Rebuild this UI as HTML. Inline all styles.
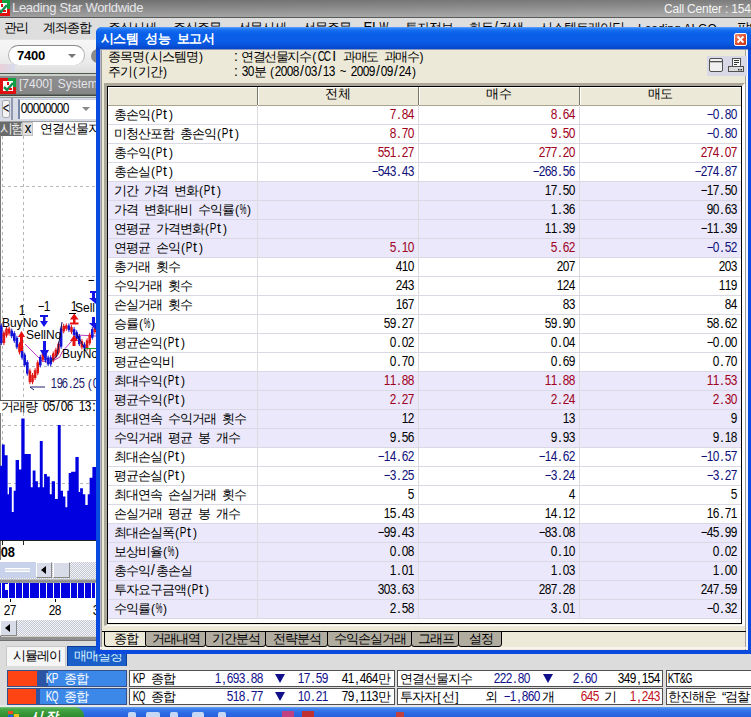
<!DOCTYPE html><html><head><meta charset="utf-8"><style>
*{margin:0;padding:0;box-sizing:border-box}
html,body{width:751px;height:717px;overflow:hidden;background:#d4d0c8;
 font-family:"Liberation Sans",sans-serif;font-size:12px;color:#000}
.a{position:absolute}
.t{white-space:nowrap;line-height:12px}

.g{white-space:nowrap;height:14px;line-height:14px}
.g .h{display:inline-block;vertical-align:top;line-height:14px;overflow:visible;white-space:nowrap}
.g .sp{display:inline-block;height:1px;vertical-align:top}
.g .c{display:inline-flex;justify-content:center;width:6px;vertical-align:top;line-height:14px;font-size:14px;position:relative;top:-1px}
.g .m{font-family:"Liberation Sans",sans-serif;display:inline-block;vertical-align:top;line-height:14px;transform-origin:0 0;overflow:visible;position:relative;top:1px}

.num{font-family:"Liberation Sans",sans-serif;font-size:12px;letter-spacing:0px}
</style></head><body>
<div class="a" style="left:0;top:0;width:751px;height:17px;background:linear-gradient(90deg,rgba(0,0,0,0.05),rgba(255,255,255,0.06)),linear-gradient(#747474,#868686 35%,#9c9c9c 75%,#a8a8a8)"></div>
<div class="a" style="left:0;top:17px;width:751px;height:1px;background:#585c58"></div>
<svg class="a" style="left:-6px;top:0px" width="16" height="16" viewBox="0 0 16 16"><rect x="0" y="0" width="16" height="16" fill="#e01010"/><path d="M8,0 H16 V9 H13 V3 H8 Z" fill="#10a040"/><rect x="3" y="3" width="10" height="10" fill="#fff"/><path d="M4,9 L7,12 L13,5" stroke="#109050" stroke-width="2.5" fill="none"/><rect x="7" y="4" width="2" height="3" fill="#e01010"/><rect x="9" y="10" width="3" height="2" fill="#e01010"/></svg>
<div class="a t" style="left:12px;top:1px;font-size:13px;line-height:14px;color:#e8e8ec;letter-spacing:-0.3px">Leading Star Worldwide</div>
<div class="a t" style="left:664px;top:3px;font-size:12px;line-height:13px;color:#f4f4f4;letter-spacing:-0.2px">Call Center : 1544</div>
<div class="a" style="left:0;top:18px;width:751px;height:21px;background:#dedede"></div>
<div class="a g" style="left:4.0px;top:21px;color:#000;"><span class="h" style="width:24.0px;font-size:13px;letter-spacing:-1.0px;">관리</span></div>
<div class="a g" style="left:43.0px;top:21px;color:#000;"><span class="h" style="width:48.0px;font-size:13px;letter-spacing:-1.0px;">계좌종합</span></div>
<div class="a g" style="left:108.0px;top:21px;color:#000;"><span class="h" style="width:48.0px;font-size:13px;letter-spacing:-1.0px;">주식시세</span></div>
<div class="a g" style="left:173.0px;top:21px;color:#000;"><span class="h" style="width:48.0px;font-size:13px;letter-spacing:-1.0px;">주식주문</span></div>
<div class="a g" style="left:238.0px;top:21px;color:#000;"><span class="h" style="width:48.0px;font-size:13px;letter-spacing:-1.0px;">선물시세</span></div>
<div class="a g" style="left:303.0px;top:21px;color:#000;"><span class="h" style="width:48.0px;font-size:13px;letter-spacing:-1.0px;">선물주문</span></div>
<div class="a g" style="left:405.0px;top:21px;color:#000;"><span class="h" style="width:48.0px;font-size:13px;letter-spacing:-1.0px;">투자정보</span></div>
<div class="a g" style="left:469.0px;top:21px;color:#000;"><span class="h" style="width:24.0px;font-size:13px;letter-spacing:-1.0px;">화두</span><span class="c">/</span><span class="h" style="width:24.0px;font-size:13px;letter-spacing:-1.0px;">검색</span></div>
<div class="a g" style="left:540.0px;top:21px;color:#000;"><span class="h" style="width:84.0px;font-size:13px;letter-spacing:-1.0px;">시스템트레이딩</span></div>
<div class="a g" style="left:737.0px;top:21px;color:#000;"><span class="h" style="width:24.0px;font-size:13px;letter-spacing:-1.0px;">팝업</span></div>
<div class="a g" style="left:364.0px;top:21px;color:#000;"><span class="c" style="width:8px;transform:scaleX(0.942);">E</span><span class="c" style="width:8px;">L</span><span class="c" style="width:8px;transform:scaleX(0.666);">W</span></div>
<div class="a t" style="left:638px;top:23px;font-size:12px;line-height:13px;letter-spacing:0px">Leading ALGO</div>
<div class="a" style="left:0;top:39px;width:751px;height:36px;background:linear-gradient(#d0d0d0 0px,#f6f6f6 1px,#f2f2f2 12px,#e8e8e8 26px,#dcdcdc 34px,#505850 34px,#505850 35.5px,#c8d0c8 35.5px)"></div>
<div class="a" style="left:0;top:64px;width:15px;height:8px;background:linear-gradient(90deg,#e8d0d8,#d8dcec)"></div>
<div class="a" style="left:8px;top:45px;width:77px;height:20px;border-radius:10px;background:#fff;border-top:1px solid #8a8a8a;border-left:1px solid #b0b0b0;border-right:1px solid #b0b0b0"></div>
<div class="a t" style="left:17px;top:49px;font-weight:bold;font-size:13px;line-height:13px;letter-spacing:-0.2px">7400</div>
<div class="a" style="left:68px;top:54px;width:0;height:0;border-left:4px solid transparent;border-right:4px solid transparent;border-top:4px solid #777"></div>
<div class="a" style="left:91px;top:49px;width:14px;height:14px;border-radius:7px;background:#8a8a8a"></div>
<div class="a" style="left:0;top:75px;width:96px;height:23px;background:linear-gradient(#c8d0c8 0px,#c8d0c8 1px,#8e8e8e 1px,#868686 19px,#444a44 20px,#444a44 21px,#d0d8d0 21px,#d0d8d0 22px,#9098a0 22px)"></div>
<svg class="a" style="left:0px;top:78px" width="16" height="16" viewBox="0 0 16 16"><rect x="0" y="0" width="16" height="16" fill="#e01010"/><path d="M8,0 H16 V9 H13 V3 H8 Z" fill="#10a040"/><rect x="3" y="3" width="10" height="10" fill="#fff"/><path d="M4,9 L7,12 L13,5" stroke="#109050" stroke-width="2.5" fill="none"/><rect x="7" y="4" width="2" height="3" fill="#e01010"/><rect x="9" y="10" width="3" height="2" fill="#e01010"/></svg>
<div class="a t" style="left:19px;top:77px;font-size:12px;line-height:14px;color:#e4e4ea;word-spacing:2px">[7400] System</div>
<div class="a" style="left:0;top:98px;width:96px;height:23px;background:#d8dce6"></div>
<div class="a" style="left:2px;top:100px;width:8px;height:18px;background:#f4f4f4;border:1px solid #a8a8b0;border-radius:2px"></div>
<div class="a g" style="left:3.0px;top:102px;color:#000;"><span class="c" style="transform:scaleX(0.807);">&lt;</span></div>
<div class="a" style="left:11px;top:98px;width:2px;height:22px;background:#9098b0"></div>
<div class="a" style="left:18px;top:99px;width:78px;height:20px;background:#fff;border-left:2px solid #7888a8;border-top:1px solid #c8d0e0"></div>
<div class="a g" style="left:21.0px;top:102px;color:#000;"><span class="c" style="transform:scaleX(0.848);">0</span><span class="c" style="transform:scaleX(0.848);">0</span><span class="c" style="transform:scaleX(0.848);">0</span><span class="c" style="transform:scaleX(0.848);">0</span><span class="c" style="transform:scaleX(0.848);">0</span><span class="c" style="transform:scaleX(0.848);">0</span><span class="c" style="transform:scaleX(0.848);">0</span><span class="c" style="transform:scaleX(0.848);">0</span></div>
<div class="a" style="left:82px;top:107px;width:0;height:0;border-left:4px solid transparent;border-right:4px solid transparent;border-top:4px solid #888"></div>
<div class="a" style="left:0;top:121px;width:96px;height:441px;background:#fff"></div>
<div class="a" style="left:0;top:121px;width:96px;height:1px;background:#a0a0a0"></div>
<div class="a" style="left:0;top:122px;width:22px;height:14px;background:#6a6a6a"></div>
<div class="a g" style="left:0.0px;top:122px;color:#f0f0f0;"><span class="h" style="width:22.0px;font-size:13px;letter-spacing:-2.0px;">시험</span></div>
<div class="a" style="left:22px;top:122px;width:11px;height:14px;background:#e0e0e0;border:1px solid #c0c0c0"></div>
<div class="a g" style="left:25.0px;top:122px;color:#000;"><span class="c" style="transform:scaleX(0.943);">x</span></div>
<div class="a g" style="left:40.0px;top:122px;color:#000;"><span class="h" style="width:72.0px;font-size:13px;letter-spacing:-1.0px;">연결선물지수</span><span class="c" style="font-size:12px;top:0px;">(</span><span class="c" style="transform:scaleX(0.653);">C</span><span class="c" style="transform:scaleX(0.653);">C</span><span class="c">I</span></div>
<svg class="a" style="left:0;top:0" width="96" height="717" viewBox="0 0 96 717">
<line x1="0.5" y1="135" x2="0.5" y2="640" stroke="#777" stroke-width="1"/>
<g stroke="#b8b8b8" stroke-width="1" stroke-dasharray="3,3" fill="none">
<line x1="2.5" y1="136" x2="2.5" y2="400"/>
<line x1="23.5" y1="136" x2="23.5" y2="400"/>
<line x1="2" y1="186.5" x2="96" y2="186.5"/>
<line x1="2" y1="276.5" x2="96" y2="276.5"/>
<line x1="2" y1="366.5" x2="96" y2="366.5"/>
<line x1="2.5" y1="401" x2="2.5" y2="540"/>
<line x1="23.5" y1="401" x2="23.5" y2="540"/>
<line x1="2" y1="425.5" x2="96" y2="425.5"/>
<line x1="2" y1="483.5" x2="96" y2="483.5"/>
</g>
<polyline points="25,344 30,349 42,361 50,362.5 60,357 62,352 77,335 96,336" stroke="#c040c0" stroke-width="1" fill="none"/>
<rect x="0.0" y="325.5" width="2.6" height="17.6" fill="#1414d8"/>
<line x1="1.3" y1="323.5" x2="1.3" y2="345.1" stroke="#1414d8" stroke-width="1"/>
<rect x="2.6" y="332.6" width="2.6" height="10.5" fill="#e01818"/>
<line x1="3.9" y1="330.6" x2="3.9" y2="345.1" stroke="#e01818" stroke-width="1"/>
<rect x="5.2" y="328.6" width="2.6" height="7.0" fill="#e01818"/>
<line x1="6.5" y1="326.6" x2="6.5" y2="337.6" stroke="#e01818" stroke-width="1"/>
<rect x="7.8" y="328.6" width="2.6" height="5.0" fill="#e01818"/>
<line x1="9.1" y1="326.6" x2="9.1" y2="335.6" stroke="#e01818" stroke-width="1"/>
<rect x="10.4" y="330.6" width="2.6" height="5.6" fill="#1414d8"/>
<line x1="11.7" y1="328.6" x2="11.7" y2="338.2" stroke="#1414d8" stroke-width="1"/>
<rect x="13.0" y="333.2" width="2.6" height="7.6" fill="#1414d8"/>
<line x1="14.3" y1="331.2" x2="14.3" y2="342.8" stroke="#1414d8" stroke-width="1"/>
<rect x="15.6" y="337.8" width="2.6" height="9.5" fill="#1414d8"/>
<line x1="16.9" y1="335.8" x2="16.9" y2="349.2" stroke="#1414d8" stroke-width="1"/>
<rect x="18.2" y="344.2" width="2.6" height="8.2" fill="#e01818"/>
<line x1="19.5" y1="342.2" x2="19.5" y2="354.5" stroke="#e01818" stroke-width="1"/>
<rect x="20.8" y="349.5" width="2.6" height="8.2" fill="#1414d8"/>
<line x1="22.1" y1="347.5" x2="22.1" y2="359.7" stroke="#1414d8" stroke-width="1"/>
<rect x="23.4" y="354.7" width="2.6" height="10.4" fill="#1414d8"/>
<line x1="24.7" y1="352.7" x2="24.7" y2="367.1" stroke="#1414d8" stroke-width="1"/>
<rect x="26.0" y="362.1" width="2.6" height="11.5" fill="#1414d8"/>
<line x1="27.3" y1="360.1" x2="27.3" y2="375.6" stroke="#1414d8" stroke-width="1"/>
<rect x="28.6" y="370.6" width="2.6" height="11.5" fill="#e01818"/>
<line x1="29.9" y1="368.6" x2="29.9" y2="384.2" stroke="#e01818" stroke-width="1"/>
<rect x="31.2" y="375.0" width="2.6" height="7.2" fill="#e01818"/>
<line x1="32.5" y1="373.0" x2="32.5" y2="384.2" stroke="#e01818" stroke-width="1"/>
<rect x="33.8" y="370.2" width="2.6" height="7.8" fill="#e01818"/>
<line x1="35.1" y1="368.2" x2="35.1" y2="380.0" stroke="#e01818" stroke-width="1"/>
<rect x="36.4" y="362.4" width="2.6" height="10.8" fill="#e01818"/>
<line x1="37.7" y1="360.4" x2="37.7" y2="375.2" stroke="#e01818" stroke-width="1"/>
<rect x="39.0" y="356.9" width="2.6" height="8.5" fill="#1414d8"/>
<line x1="40.3" y1="354.9" x2="40.3" y2="367.4" stroke="#1414d8" stroke-width="1"/>
<rect x="41.6" y="353.6" width="2.6" height="6.2" fill="#e01818"/>
<line x1="42.9" y1="351.6" x2="42.9" y2="361.9" stroke="#e01818" stroke-width="1"/>
<rect x="44.2" y="353.6" width="2.6" height="6.9" fill="#1414d8"/>
<line x1="45.5" y1="351.6" x2="45.5" y2="362.5" stroke="#1414d8" stroke-width="1"/>
<rect x="46.8" y="357.5" width="2.6" height="6.8" fill="#1414d8"/>
<line x1="48.1" y1="355.5" x2="48.1" y2="366.3" stroke="#1414d8" stroke-width="1"/>
<rect x="49.4" y="357.4" width="2.6" height="6.9" fill="#1414d8"/>
<line x1="50.7" y1="355.4" x2="50.7" y2="366.3" stroke="#1414d8" stroke-width="1"/>
<rect x="52.0" y="353.5" width="2.6" height="6.9" fill="#e01818"/>
<line x1="53.3" y1="351.5" x2="53.3" y2="362.4" stroke="#e01818" stroke-width="1"/>
<rect x="54.6" y="349.6" width="2.6" height="6.9" fill="#e01818"/>
<line x1="55.9" y1="347.6" x2="55.9" y2="358.5" stroke="#e01818" stroke-width="1"/>
<rect x="57.2" y="343.7" width="2.6" height="9.0" fill="#e01818"/>
<line x1="58.5" y1="341.7" x2="58.5" y2="354.6" stroke="#e01818" stroke-width="1"/>
<rect x="59.8" y="328.4" width="2.6" height="18.3" fill="#1414d8"/>
<line x1="61.1" y1="326.4" x2="61.1" y2="348.7" stroke="#1414d8" stroke-width="1"/>
<rect x="62.4" y="325.8" width="2.6" height="5.6" fill="#e01818"/>
<line x1="63.7" y1="323.8" x2="63.7" y2="333.4" stroke="#e01818" stroke-width="1"/>
<rect x="65.0" y="325.4" width="2.6" height="3.4" fill="#e01818"/>
<line x1="66.3" y1="323.4" x2="66.3" y2="330.8" stroke="#e01818" stroke-width="1"/>
<rect x="67.6" y="325.4" width="2.6" height="4.7" fill="#1414d8"/>
<line x1="68.9" y1="323.4" x2="68.9" y2="332.1" stroke="#1414d8" stroke-width="1"/>
<rect x="70.2" y="327.1" width="2.6" height="5.0" fill="#e01818"/>
<line x1="71.5" y1="325.1" x2="71.5" y2="334.1" stroke="#e01818" stroke-width="1"/>
<rect x="72.8" y="329.1" width="2.6" height="6.1" fill="#1414d8"/>
<line x1="74.1" y1="327.1" x2="74.1" y2="337.2" stroke="#1414d8" stroke-width="1"/>
<rect x="75.4" y="332.2" width="2.6" height="6.7" fill="#1414d8"/>
<line x1="76.7" y1="330.2" x2="76.7" y2="340.9" stroke="#1414d8" stroke-width="1"/>
<rect x="78.0" y="335.9" width="2.6" height="8.2" fill="#1414d8"/>
<line x1="79.3" y1="333.9" x2="79.3" y2="346.1" stroke="#1414d8" stroke-width="1"/>
<rect x="80.6" y="341.1" width="2.6" height="6.3" fill="#e01818"/>
<line x1="81.9" y1="339.1" x2="81.9" y2="349.4" stroke="#e01818" stroke-width="1"/>
<rect x="83.2" y="344.4" width="2.6" height="4.1" fill="#1414d8"/>
<line x1="84.5" y1="342.4" x2="84.5" y2="350.5" stroke="#1414d8" stroke-width="1"/>
<rect x="85.8" y="340.3" width="2.6" height="8.2" fill="#e01818"/>
<line x1="87.1" y1="338.3" x2="87.1" y2="350.5" stroke="#e01818" stroke-width="1"/>
<rect x="88.4" y="334.7" width="2.6" height="8.6" fill="#e01818"/>
<line x1="89.7" y1="332.7" x2="89.7" y2="345.3" stroke="#e01818" stroke-width="1"/>
<rect x="91.0" y="329.1" width="2.6" height="8.6" fill="#1414d8"/>
<line x1="92.3" y1="327.1" x2="92.3" y2="339.7" stroke="#1414d8" stroke-width="1"/>
<rect x="93.6" y="325.6" width="2.6" height="6.5" fill="#e01818"/>
<line x1="94.9" y1="323.6" x2="94.9" y2="334.1" stroke="#e01818" stroke-width="1"/>
<polyline points="50,362 57,356 62,322" stroke="#101060" stroke-width="1" fill="none"/>
<polyline points="76,333 84,347" stroke="#101060" stroke-width="1" fill="none"/>
<line x1="85" y1="348.5" x2="96" y2="348.5" stroke="#20a020"/>
<g fill="#e81010">
<polygon points="18,337 25,337 21.5,331"/><rect x="20" y="336" width="3" height="15"/>
<polygon points="70,319.5 78.5,319.5 74.2,313.5"/><rect x="73" y="319" width="2.5" height="4"/><rect x="70" y="322.5" width="8.5" height="2"/>
<polygon points="70,341 78,341 74,335"/><rect x="72.5" y="340" width="3" height="6"/>
</g>
<g fill="#1414e8">
<rect x="40" y="315" width="8" height="2"/><rect x="43" y="316" width="2.5" height="5"/><polygon points="40,321 48,321 44,327"/>
<rect x="43" y="341" width="3" height="9"/><polygon points="40,350 49,350 44.5,358"/>
<rect x="90" y="291" width="6" height="2"/><rect x="92" y="292" width="3" height="6"/><polygon points="89,298 96,298 96,304"/>
<rect x="92" y="317" width="3" height="6"/><polygon points="89,323 96,323 96,330"/>
</g>
<path d="M30,387 L45,387 M30,387 L34,390" stroke="#202070" stroke-width="1" fill="none"/>
<line x1="0" y1="400.5" x2="96" y2="400.5" stroke="#555" stroke-width="1"/>
<path d="M0,540 L0.0,465.8 L1.9,465.8 L1.9,444.5 L4.7,444.5 L4.7,455.2 L7.6,455.2 L7.6,494.3 L9.0,494.3 L9.0,487.2 L11.8,487.2 L11.8,512.0 L13.7,512.0 L13.7,490.7 L15.6,490.7 L15.6,459.9 L19.0,459.9 L19.0,469.4 L21.3,469.4 L21.3,418.4 L24.6,418.4 L24.6,454.0 L27.5,454.0 L27.5,454.0 L30.8,454.0 L30.8,487.2 L32.7,487.2 L32.7,470.6 L35.5,470.6 L35.5,481.2 L37.9,481.2 L37.9,487.2 L39.8,487.2 L39.8,440.9 L42.7,440.9 L42.7,487.2 L44.1,487.2 L44.1,474.1 L46.9,474.1 L46.9,476.5 L49.8,476.5 L49.8,494.3 L51.7,494.3 L51.7,481.2 L55.0,481.2 L55.0,499.0 L57.8,499.0 L57.8,425.1 L60.7,425.1 L60.7,490.7 L63.0,490.7 L63.0,496.6 L65.4,496.6 L65.4,507.3 L67.3,507.3 L67.3,490.7 L68.7,490.7 L68.7,472.9 L71.1,472.9 L71.1,471.8 L75.4,471.8 L75.4,457.1 L78.7,457.1 L78.7,491.9 L80.1,491.9 L80.1,488.3 L82.9,488.3 L82.9,494.3 L85.3,494.3 L85.3,504.9 L87.7,504.9 L87.7,494.3 L89.6,494.3 L89.6,477.7 L92.4,477.7 L92.4,467.0 L94.8,467.0 L94.8,467.0 L96.0,467.0 L96,540 Z" fill="#0000e0"/>
<line x1="0" y1="540.5" x2="96" y2="540.5" stroke="#222" stroke-width="1"/>
<line x1="2.5" y1="541" x2="2.5" y2="545" stroke="#222"/>
<line x1="23.5" y1="541" x2="23.5" y2="545" stroke="#222"/>
</svg>
<div class="a g" style="left:19.0px;top:304px;color:#000;"><span class="c" style="transform:scaleX(0.848);">1</span></div>
<div class="a g" style="left:38.0px;top:300px;color:#000;"><span class="c" style="transform:scaleX(0.807);">−</span><span class="c" style="transform:scaleX(0.848);">1</span></div>
<div class="a g" style="left:71.0px;top:300px;color:#000;"><span class="c" style="transform:scaleX(0.848);">1</span></div>
<div class="a g" style="left:88.0px;top:274px;color:#000;"><span class="c" style="transform:scaleX(0.807);">−</span></div>
<div class="a t" style="left:75px;top:302px;font-size:12px;line-height:12px">Sell</div>
<div class="a" style="left:69px;top:313px;width:7px;height:1px;background:#000"></div>
<div class="a t" style="left:2px;top:317px;font-size:12px;line-height:12px">BuyNo</div>
<div class="a t" style="left:26px;top:329px;font-size:12px;line-height:12px">SellNo</div>
<div class="a t" style="left:62px;top:348px;font-size:12px;line-height:12px">BuyNo</div>
<div class="a g" style="left:51.0px;top:377px;color:#1a1a6a;"><span class="c" style="width:5.6px;transform:scaleX(0.791);">1</span><span class="c" style="width:5.6px;transform:scaleX(0.791);">9</span><span class="c" style="width:5.6px;transform:scaleX(0.791);">6</span><span class="c" style="width:5.6px;">.</span><span class="c" style="width:5.6px;transform:scaleX(0.791);">2</span><span class="c" style="width:5.6px;transform:scaleX(0.791);">5</span></div>
<div class="a g" style="left:87.0px;top:377px;color:#1a1a6a;"><span class="c" style="width:5.6px;font-size:12px;top:0px;">(</span><span class="c" style="width:5.6px;transform:scaleX(0.791);">0</span></div>
<div class="a" style="left:0;top:401px;width:96px;height:12px;background:#fff"></div>
<div class="a g" style="left:1.0px;top:400px;color:#000;"><span class="h" style="width:36.0px;font-size:13px;letter-spacing:-1.0px;">거래량</span><span class="sp" style="width:6px"></span><span class="c" style="transform:scaleX(0.848);">0</span><span class="c" style="transform:scaleX(0.848);">5</span><span class="c">/</span><span class="c" style="transform:scaleX(0.848);">0</span><span class="c" style="transform:scaleX(0.848);">6</span><span class="sp" style="width:6px"></span><span class="c" style="transform:scaleX(0.848);">1</span><span class="c" style="transform:scaleX(0.848);">3</span><span class="c">:</span></div>
<div class="a g" style="left:1.0px;top:546px;color:#000;"><span class="c" style="width:6.5px;transform:scaleX(0.918);font-weight:bold;">0</span><span class="c" style="width:6.5px;transform:scaleX(0.918);font-weight:bold;">8</span></div>
<div class="a" style="left:0;top:560px;width:96px;height:2px;background:#fff"></div>
<div class="a" style="left:0;top:562px;width:96px;height:17px;background:repeating-conic-gradient(#c4c8d4 0 25%,#f4f4f8 0 50%) 0 0/2px 2px"></div>
<div class="a" style="left:0;top:562px;width:36px;height:16px;background:#c8d2ea"></div>
<div class="a" style="left:5px;top:568px;width:25px;height:4px;border-top:1px solid #fff;border-bottom:1px solid #fff;background:#e0e4ee"></div>
<div class="a" style="left:36px;top:562px;width:16px;height:16px;background:#d8dce8;border:1px solid #fff;border-right-color:#888;border-bottom-color:#888"></div>
<div class="a" style="left:41px;top:566px;width:0;height:0;border-top:4px solid transparent;border-bottom:4px solid transparent;border-right:5px solid #000"></div>
<div class="a" style="left:53px;top:562px;width:17px;height:16px;background:#d8dce8;border:1px solid #fff;border-right-color:#888;border-bottom-color:#888"></div>
<div class="a" style="left:0;top:579px;width:96px;height:4px;background:linear-gradient(#e0e0e0,#9a9a9a 1px,#8a8a8a 3px,#b0b0b0)"></div>
<svg class="a" style="left:0;top:583px" width="96" height="15"><rect x="0" y="0" width="96" height="15" fill="#0000e0"/><rect x="1" y="0" width="1" height="15" fill="#fff"/><rect x="8" y="0" width="1" height="15" fill="#fff"/><rect x="15" y="0" width="1" height="15" fill="#fff"/><rect x="22" y="0" width="1" height="15" fill="#fff"/><rect x="29" y="0" width="1" height="15" fill="#fff"/><rect x="39" y="0" width="1" height="15" fill="#fff"/><rect x="46" y="0" width="1" height="15" fill="#fff"/><rect x="53" y="0" width="1" height="15" fill="#fff"/><rect x="60" y="0" width="1" height="15" fill="#fff"/><rect x="70" y="0" width="1" height="15" fill="#fff"/><rect x="77" y="0" width="1" height="15" fill="#fff"/><rect x="84" y="0" width="1" height="15" fill="#fff"/><rect x="91" y="0" width="1" height="15" fill="#fff"/><rect x="95" y="0" width="1" height="15" fill="#fff"/><rect x="5" y="1" width="4" height="6" fill="#fff"/></svg>
<div class="a" style="left:0;top:598px;width:96px;height:22px;background:#fff"></div>
<div class="a" style="left:10px;top:599px;width:1px;height:3px;background:#000"></div>
<div class="a" style="left:55px;top:599px;width:1px;height:3px;background:#000"></div>
<div class="a g" style="left:4.0px;top:604px;color:#000;"><span class="c" style="transform:scaleX(0.848);">2</span><span class="c" style="transform:scaleX(0.848);">7</span></div>
<div class="a g" style="left:49.0px;top:604px;color:#000;"><span class="c" style="transform:scaleX(0.848);">2</span><span class="c" style="transform:scaleX(0.848);">8</span></div>
<div class="a g" style="left:93.0px;top:604px;color:#000;"><span class="c" style="transform:scaleX(0.848);">3</span></div>
<div class="a" style="left:0;top:620px;width:96px;height:16px;background:repeating-conic-gradient(#c4c8d4 0 25%,#f4f4f8 0 50%) 0 0/2px 2px"></div>
<div class="a" style="left:0;top:620px;width:17px;height:16px;background:#d8dce8;border:1px solid #fff;border-right-color:#888;border-bottom-color:#888"></div>
<div class="a" style="left:5px;top:624px;width:0;height:0;border-top:4px solid transparent;border-bottom:4px solid transparent;border-right:5px solid #000"></div>
<div class="a" style="left:0;top:637px;width:96px;height:3px;background:#909090"></div>
<div class="a" style="left:0;top:640px;width:751px;height:67px;background:#dcdcdc"></div>
<div class="a" style="left:0;top:705px;width:751px;height:2px;background:#e8e8e8"></div>
<div class="a" style="left:0;top:640px;width:96px;height:1px;background:#707070"></div>
<div class="a" style="left:6px;top:646px;width:60px;height:20px;background:#f6f6f6;border:1px solid #c8c8c8;border-bottom:none"></div>
<div class="a g" style="left:13.0px;top:649px;color:#000;"><span class="h" style="width:48.0px;font-size:13px;letter-spacing:-1.0px;">시뮬레이</span></div>
<div class="a" style="left:67px;top:646px;width:60px;height:20px;background:#1a5fc8;border:1px solid #0c3c98;border-bottom:none"></div>
<div class="a g" style="left:74.0px;top:649px;color:#d8f4ff;"><span class="h" style="width:48.0px;font-size:13px;letter-spacing:-1.0px;">매매설정</span></div>
<div class="a" style="left:7px;top:670px;width:120px;height:17px;background:#3c88e8;border:1px solid #34508a"></div>
<div class="a" style="left:8px;top:671px;width:29px;height:15px;background:#ff4414"></div>
<div class="a" style="left:37px;top:671px;width:11px;height:15px;background:#2c54a4"></div>
<div class="a g" style="left:46.0px;top:672px;color:#fff;"><span class="c" style="transform:scaleX(0.707);">K</span><span class="c" style="transform:scaleX(0.707);">P</span><span class="sp" style="width:6px"></span><span class="h" style="width:24.0px;font-size:13px;letter-spacing:-1.0px;">종합</span></div>
<div class="a" style="left:7px;top:688px;width:120px;height:17px;background:#3c88e8;border:1px solid #34508a"></div>
<div class="a" style="left:8px;top:689px;width:28px;height:15px;background:#ff4414"></div>
<div class="a" style="left:36px;top:689px;width:4px;height:15px;background:#2c54a4"></div>
<div class="a g" style="left:46.0px;top:690px;color:#fff;"><span class="c" style="transform:scaleX(0.707);">K</span><span class="c" style="transform:scaleX(0.606);">Q</span><span class="sp" style="width:6px"></span><span class="h" style="width:24.0px;font-size:13px;letter-spacing:-1.0px;">종합</span></div>
<div class="a" style="left:129px;top:670px;width:266px;height:17px;background:#fff;border:1px solid #505050"></div>
<div class="a" style="left:397px;top:670px;width:266px;height:17px;background:#fff;border:1px solid #505050"></div>
<div class="a" style="left:666px;top:670px;width:90px;height:17px;background:#fff;border:1px solid #505050"></div>
<div class="a g" style="left:133.0px;top:672px;color:#000;"><span class="c" style="transform:scaleX(0.707);">K</span><span class="c" style="transform:scaleX(0.707);">P</span><span class="sp" style="width:6px"></span><span class="h" style="width:24.0px;font-size:13px;letter-spacing:-1.0px;">종합</span></div>
<div class="a g" style="left:215.0px;top:672px;color:#10108a;"><span class="c" style="transform:scaleX(0.848);">1</span><span class="c">,</span><span class="c" style="transform:scaleX(0.848);">6</span><span class="c" style="transform:scaleX(0.848);">9</span><span class="c" style="transform:scaleX(0.848);">3</span><span class="c">.</span><span class="c" style="transform:scaleX(0.848);">8</span><span class="c" style="transform:scaleX(0.848);">8</span></div>
<div class="a g" style="left:298.0px;top:672px;color:#10108a;"><span class="c" style="transform:scaleX(0.848);">1</span><span class="c" style="transform:scaleX(0.848);">7</span><span class="c">.</span><span class="c" style="transform:scaleX(0.848);">5</span><span class="c" style="transform:scaleX(0.848);">9</span></div>
<div class="a g" style="left:342.0px;top:672px;color:#000;"><span class="c" style="transform:scaleX(0.848);">4</span><span class="c" style="transform:scaleX(0.848);">1</span><span class="c">,</span><span class="c" style="transform:scaleX(0.848);">4</span><span class="c" style="transform:scaleX(0.848);">6</span><span class="c" style="transform:scaleX(0.848);">4</span><span class="h" style="width:12.0px;font-size:13px;letter-spacing:-1.0px;">만</span></div>
<div class="a g" style="left:400.0px;top:672px;color:#000;"><span class="h" style="width:72.0px;font-size:13px;letter-spacing:-1.0px;">연결선물지수</span></div>
<div class="a g" style="left:494.0px;top:672px;color:#10108a;"><span class="c" style="transform:scaleX(0.848);">2</span><span class="c" style="transform:scaleX(0.848);">2</span><span class="c" style="transform:scaleX(0.848);">2</span><span class="c">.</span><span class="c" style="transform:scaleX(0.848);">8</span><span class="c" style="transform:scaleX(0.848);">0</span></div>
<div class="a g" style="left:573.0px;top:672px;color:#10108a;"><span class="c" style="transform:scaleX(0.848);">2</span><span class="c">.</span><span class="c" style="transform:scaleX(0.848);">6</span><span class="c" style="transform:scaleX(0.848);">0</span></div>
<div class="a g" style="left:618.0px;top:672px;color:#000;"><span class="c" style="transform:scaleX(0.848);">3</span><span class="c" style="transform:scaleX(0.848);">4</span><span class="c" style="transform:scaleX(0.848);">9</span><span class="c">,</span><span class="c" style="transform:scaleX(0.848);">1</span><span class="c" style="transform:scaleX(0.848);">5</span><span class="c" style="transform:scaleX(0.848);">4</span></div>
<div class="a g" style="left:668.0px;top:672px;color:#000;"><span class="c" style="transform:scaleX(0.707);">K</span><span class="c" style="transform:scaleX(0.772);">T</span><span class="c" style="transform:scaleX(0.707);">&amp;</span><span class="c" style="transform:scaleX(0.606);">G</span></div>
<div class="a" style="left:275px;top:674px;width:0;height:0;border-left:5px solid transparent;border-right:5px solid transparent;border-top:9px solid #10108a"></div>
<div class="a" style="left:543px;top:674px;width:0;height:0;border-left:5px solid transparent;border-right:5px solid transparent;border-top:9px solid #10108a"></div>
<div class="a" style="left:129px;top:688px;width:266px;height:17px;background:#fff;border:1px solid #505050"></div>
<div class="a" style="left:397px;top:688px;width:266px;height:17px;background:#fff;border:1px solid #505050"></div>
<div class="a" style="left:666px;top:688px;width:90px;height:17px;background:#fff;border:1px solid #505050"></div>
<div class="a g" style="left:133.0px;top:690px;color:#000;"><span class="c" style="transform:scaleX(0.707);">K</span><span class="c" style="transform:scaleX(0.606);">Q</span><span class="sp" style="width:6px"></span><span class="h" style="width:24.0px;font-size:13px;letter-spacing:-1.0px;">종합</span></div>
<div class="a g" style="left:227.0px;top:690px;color:#10108a;"><span class="c" style="transform:scaleX(0.848);">5</span><span class="c" style="transform:scaleX(0.848);">1</span><span class="c" style="transform:scaleX(0.848);">8</span><span class="c">.</span><span class="c" style="transform:scaleX(0.848);">7</span><span class="c" style="transform:scaleX(0.848);">7</span></div>
<div class="a g" style="left:298.0px;top:690px;color:#10108a;"><span class="c" style="transform:scaleX(0.848);">1</span><span class="c" style="transform:scaleX(0.848);">0</span><span class="c">.</span><span class="c" style="transform:scaleX(0.848);">2</span><span class="c" style="transform:scaleX(0.848);">1</span></div>
<div class="a g" style="left:342.0px;top:690px;color:#000;"><span class="c" style="transform:scaleX(0.848);">7</span><span class="c" style="transform:scaleX(0.848);">9</span><span class="c">,</span><span class="c" style="transform:scaleX(0.848);">1</span><span class="c" style="transform:scaleX(0.848);">1</span><span class="c" style="transform:scaleX(0.848);">3</span><span class="h" style="width:12.0px;font-size:13px;letter-spacing:-1.0px;">만</span></div>
<div class="a g" style="left:400.0px;top:690px;color:#000;"><span class="h" style="width:36.0px;font-size:13px;letter-spacing:-1.0px;">투자자</span><span class="c" style="font-size:12px;top:0px;">[</span><span class="h" style="width:12.0px;font-size:13px;letter-spacing:-1.0px;">선</span><span class="c" style="font-size:12px;top:0px;">]</span></div>
<div class="a g" style="left:485.0px;top:690px;color:#000;"><span class="h" style="width:12.0px;font-size:13px;letter-spacing:-1.0px;">외</span></div>
<div class="a g" style="left:504.0px;top:690px;color:#10108a;"><span class="c" style="transform:scaleX(0.807);">−</span><span class="c" style="transform:scaleX(0.848);">1</span><span class="c">,</span><span class="c" style="transform:scaleX(0.848);">8</span><span class="c" style="transform:scaleX(0.848);">6</span><span class="c" style="transform:scaleX(0.848);">0</span></div>
<div class="a g" style="left:542.0px;top:690px;color:#000;"><span class="h" style="width:12.0px;font-size:13px;letter-spacing:-1.0px;">개</span></div>
<div class="a g" style="left:581.0px;top:690px;color:#c01020;"><span class="c" style="transform:scaleX(0.848);">6</span><span class="c" style="transform:scaleX(0.848);">4</span><span class="c" style="transform:scaleX(0.848);">5</span></div>
<div class="a g" style="left:604.0px;top:690px;color:#000;"><span class="h" style="width:12.0px;font-size:13px;letter-spacing:-1.0px;">기</span></div>
<div class="a g" style="left:630.0px;top:690px;color:#c01020;"><span class="c" style="transform:scaleX(0.848);">1</span><span class="c">,</span><span class="c" style="transform:scaleX(0.848);">2</span><span class="c" style="transform:scaleX(0.848);">4</span><span class="c" style="transform:scaleX(0.848);">3</span></div>
<div class="a g" style="left:668.0px;top:690px;color:#000;"><span class="h" style="width:48.0px;font-size:13px;letter-spacing:-1.0px;">한진해운</span><span class="sp" style="width:6px"></span><span class="h" style="width:36.0px;font-size:13px;letter-spacing:-1.0px;">“검찰</span></div>
<div class="a" style="left:275px;top:692px;width:0;height:0;border-left:5px solid transparent;border-right:5px solid transparent;border-top:9px solid #10108a"></div>
<div class="a" style="left:0;top:707px;width:751px;height:10px;background:linear-gradient(#6aa0f4,#3c7eec 2px,#2c6ae4 6px,#2862dc)"></div>
<div class="a" style="left:0;top:707px;width:84px;height:10px;background:linear-gradient(#7cc47c,#48a848 2px,#389838 6px,#2e8a2e);border-radius:0 9px 0 0"></div>
<svg class="a" style="left:8px;top:710px" width="12" height="7"><rect x="0" y="1" width="5" height="3" fill="#f05020"/><rect x="6" y="0" width="5" height="3" fill="#40b030"/><rect x="0" y="5" width="5" height="3" fill="#2060e0"/><rect x="6" y="4" width="5" height="3" fill="#f0c020"/></svg>
<div class="a t" style="left:30px;top:711px;font-size:13px;font-weight:bold;color:#fff;font-style:italic;letter-spacing:2px">시작</div>
<div class="a" style="left:128px;top:712px;width:8px;height:5px;background:#c8d8f4;border-radius:2px 2px 0 0"></div>
<div class="a" style="left:146px;top:712px;width:14px;height:5px;background:#c8d8f4;border-radius:2px 2px 0 0"></div>
<div class="a" style="left:170px;top:712px;width:8px;height:5px;background:#c8d8f4;border-radius:2px 2px 0 0"></div>
<div class="a" style="left:192px;top:712px;width:12px;height:5px;background:#c8d8f4;border-radius:2px 2px 0 0"></div>
<div class="a" style="left:218px;top:712px;width:8px;height:5px;background:#c8d8f4;border-radius:2px 2px 0 0"></div>
<div class="a" style="left:282px;top:711px;width:12px;height:6px;background:#c04080"></div>
<div class="a" style="left:302px;top:711px;width:12px;height:6px;background:#c03030"></div>
<div class="a" style="left:396px;top:712px;width:8px;height:5px;background:#c04040"></div>
<div class="a" style="left:96px;top:27px;width:660px;height:627px;background:#0b4ade;border-radius:6px 6px 0 0"></div>
<div class="a" style="left:96px;top:27px;width:660px;height:23px;border-radius:6px 6px 0 0;background:linear-gradient(#68a8fc 0px,#3888f8 1px,#1870f0 3px,#0a60ea 6px,#0a5ce6 14px,#0854dc 18px,#0648cc 21px,#0644c4 23px)"></div>
<div class="a g" style="left:101.0px;top:32px;color:#fff;"><span class="h" style="width:37.2px;font-size:13px;letter-spacing:-0.6px;font-weight:bold;">시스템</span><span class="sp" style="width:7px"></span><span class="h" style="width:24.8px;font-size:13px;letter-spacing:-0.6px;font-weight:bold;">성능</span><span class="sp" style="width:7px"></span><span class="h" style="width:37.2px;font-size:13px;letter-spacing:-0.6px;font-weight:bold;">보고서</span></div>
<div class="a" style="left:734px;top:33px;width:13px;height:13px;background:linear-gradient(135deg,#f09070,#e05030 50%,#c83818);border:1px solid #fff;border-radius:2px"></div>
<svg class="a" style="left:734px;top:33px" width="13" height="13"><path d="M3.5,3.5 L9.5,9.5 M9.5,3.5 L3.5,9.5" stroke="#fff" stroke-width="2"/></svg>
<div class="a" style="left:100px;top:50px;width:648px;height:600px;background:#ece9d8"></div>
<div class="a" style="left:100px;top:49px;width:648px;height:1px;background:#8898c0"></div>
<div class="a" style="left:100px;top:50px;width:1px;height:600px;background:#b0b8d0"></div>
<div class="a" style="left:101px;top:50px;width:1px;height:600px;background:#a09c90"></div>
<div class="a" style="left:745px;top:50px;width:1px;height:600px;background:#a8a098"></div>
<div class="a" style="left:746px;top:50px;width:2px;height:600px;background:#eef6fc"></div>
<div class="a g" style="left:108.0px;top:50px;color:#000;"><span class="h" style="width:36.0px;font-size:13px;letter-spacing:-1.0px;">종목명</span><span class="c" style="font-size:12px;top:0px;">(</span><span class="h" style="width:48.0px;font-size:13px;letter-spacing:-1.0px;">시스템명</span><span class="c" style="font-size:12px;top:0px;">)</span></div>
<div class="a g" style="left:233.0px;top:50px;color:#000;"><span class="c">:</span></div>
<div class="a g" style="left:241.0px;top:50px;color:#000;"><span class="h" style="width:69.6px;font-size:13px;letter-spacing:-1.4px;">연결선물지수</span></div>
<div class="a g" style="left:311.0px;top:50px;color:#000;"><span class="c" style="width:6.6px;font-size:12px;top:0px;">(</span><span class="c" style="width:6.6px;transform:scaleX(0.718);">C</span><span class="c" style="width:6.6px;transform:scaleX(0.718);">C</span><span class="c" style="width:6.6px;">I</span></div>
<div class="a g" style="left:343.0px;top:50px;color:#000;"><span class="h" style="width:34.8px;font-size:13px;letter-spacing:-1.4px;">과매도</span><span class="sp" style="width:6px"></span><span class="h" style="width:34.8px;font-size:13px;letter-spacing:-1.4px;">과매수</span><span class="c" style="font-size:12px;top:0px;">)</span></div>
<div class="a g" style="left:108.0px;top:65px;color:#000;"><span class="h" style="width:24.0px;font-size:13px;letter-spacing:-1.0px;">주기</span><span class="c" style="font-size:12px;top:0px;">(</span><span class="h" style="width:24.0px;font-size:13px;letter-spacing:-1.0px;">기간</span><span class="c" style="font-size:12px;top:0px;">)</span></div>
<div class="a g" style="left:233.0px;top:65px;color:#000;"><span class="c">:</span></div>
<div class="a g" style="left:242.0px;top:65px;color:#000;"><span class="c" style="transform:scaleX(0.848);">3</span><span class="c" style="transform:scaleX(0.848);">0</span><span class="h" style="width:12.0px;font-size:13px;letter-spacing:-1.0px;">분</span></div>
<div class="a g" style="left:269.0px;top:65px;color:#000;"><span class="c" style="font-size:12px;top:0px;">(</span><span class="c" style="transform:scaleX(0.848);">2</span><span class="c" style="transform:scaleX(0.848);">0</span><span class="c" style="transform:scaleX(0.848);">0</span><span class="c" style="transform:scaleX(0.848);">8</span><span class="c">/</span><span class="c" style="transform:scaleX(0.848);">0</span><span class="c" style="transform:scaleX(0.848);">3</span><span class="c">/</span><span class="c" style="transform:scaleX(0.848);">1</span><span class="c" style="transform:scaleX(0.848);">3</span><span class="sp" style="width:5px"></span><span class="c" style="transform:scaleX(0.807);">~</span><span class="sp" style="width:5px"></span><span class="c" style="transform:scaleX(0.848);">2</span><span class="c" style="transform:scaleX(0.848);">0</span><span class="c" style="transform:scaleX(0.848);">0</span><span class="c" style="transform:scaleX(0.848);">9</span><span class="c">/</span><span class="c" style="transform:scaleX(0.848);">0</span><span class="c" style="transform:scaleX(0.848);">9</span><span class="c">/</span><span class="c" style="transform:scaleX(0.848);">2</span><span class="c" style="transform:scaleX(0.848);">4</span><span class="c" style="font-size:12px;top:0px;">)</span></div>
<div class="a" style="left:707px;top:56px;width:40px;height:20px;background:#d8d8e6"></div>
<svg class="a" style="left:707px;top:56px" width="40" height="20"><rect x="2.5" y="2.5" width="13" height="13" rx="1.5" fill="#f0f0f0" stroke="#505050"/><line x1="3" y1="5.5" x2="15" y2="5.5" stroke="#505050"/><line x1="3" y1="6.5" x2="15" y2="6.5" stroke="#c0c0c0"/><rect x="25.5" y="2.5" width="8" height="9" fill="#f8f8f8" stroke="#505050"/><line x1="27" y1="4.5" x2="32" y2="4.5" stroke="#333"/><line x1="27" y1="6.5" x2="32" y2="6.5" stroke="#333"/><line x1="27" y1="8.5" x2="30" y2="8.5" stroke="#333"/><rect x="21.5" y="10.5" width="15" height="5" fill="#dcdcdc" stroke="#505050"/><rect x="31" y="13" width="1.5" height="1.5" fill="#333"/><rect x="33.5" y="13" width="1.5" height="1.5" fill="#333"/></svg>
<div class="a" style="left:104px;top:83px;width:641px;height:543px;border-top:3px solid #aca899;border-left:3px solid #aca899;border-right:3px solid #fff;border-bottom:1px solid #fff"></div>
<div class="a" style="left:107px;top:86px;width:635px;height:538px;border:1px solid #000;background:#fff"></div>
<div class="a" style="left:108px;top:87px;width:633px;height:19px;background:#ece9d8;border-bottom:1px solid #a8a490"></div>
<div class="a" style="left:108px;top:87px;width:633px;height:1px;background:#fff"></div>
<div class="a" style="left:108px;top:87px;width:1px;height:18px;background:#fff"></div>
<div class="a" style="left:257px;top:87px;width:1px;height:18px;background:#7a7868"></div>
<div class="a" style="left:258px;top:88px;width:1px;height:17px;background:#fff"></div>
<div class="a" style="left:418px;top:87px;width:1px;height:18px;background:#7a7868"></div>
<div class="a" style="left:419px;top:88px;width:1px;height:17px;background:#fff"></div>
<div class="a" style="left:579px;top:87px;width:1px;height:18px;background:#7a7868"></div>
<div class="a" style="left:580px;top:88px;width:1px;height:17px;background:#fff"></div>
<div class="a g" style="left:325.0px;top:87px;color:#000;"><span class="h" style="width:25.0px;font-size:13px;letter-spacing:-0.5px;">전체</span></div>
<div class="a g" style="left:486.0px;top:87px;color:#000;"><span class="h" style="width:25.0px;font-size:13px;letter-spacing:-0.5px;">매수</span></div>
<div class="a g" style="left:647.5px;top:87px;color:#000;"><span class="h" style="width:25.0px;font-size:13px;letter-spacing:-0.5px;">매도</span></div>
<div class="a" style="left:108px;top:106px;width:633px;height:19px;background:#fff;border-bottom:1px solid #dad8e4"></div>
<div class="a g" style="left:114.0px;top:108px;color:#000;"><span class="h" style="width:36.0px;font-size:13px;letter-spacing:-1.0px;">총손익</span><span class="c" style="font-size:12px;top:0px;">(</span><span class="c" style="transform:scaleX(0.707);">P</span><span class="c">t</span><span class="c" style="font-size:12px;top:0px;">)</span></div>
<div class="a g" style="left:390.0px;top:108px;color:#a0001c;"><span class="c" style="transform:scaleX(0.848);">7</span><span class="c">.</span><span class="c" style="transform:scaleX(0.848);">8</span><span class="c" style="transform:scaleX(0.848);">4</span></div>
<div class="a g" style="left:551.0px;top:108px;color:#a0001c;"><span class="c" style="transform:scaleX(0.848);">8</span><span class="c">.</span><span class="c" style="transform:scaleX(0.848);">6</span><span class="c" style="transform:scaleX(0.848);">4</span></div>
<div class="a g" style="left:707.0px;top:108px;color:#10107a;"><span class="c" style="transform:scaleX(0.807);">−</span><span class="c" style="transform:scaleX(0.848);">0</span><span class="c">.</span><span class="c" style="transform:scaleX(0.848);">8</span><span class="c" style="transform:scaleX(0.848);">0</span></div>
<div class="a" style="left:108px;top:125px;width:633px;height:19px;background:#fff;border-bottom:1px solid #dad8e4"></div>
<div class="a g" style="left:114.0px;top:127px;color:#000;"><span class="h" style="width:60.0px;font-size:13px;letter-spacing:-1.0px;">미청산포함</span><span class="sp" style="width:6px"></span><span class="h" style="width:36.0px;font-size:13px;letter-spacing:-1.0px;">총손익</span><span class="c" style="font-size:12px;top:0px;">(</span><span class="c" style="transform:scaleX(0.707);">P</span><span class="c">t</span><span class="c" style="font-size:12px;top:0px;">)</span></div>
<div class="a g" style="left:390.0px;top:127px;color:#a0001c;"><span class="c" style="transform:scaleX(0.848);">8</span><span class="c">.</span><span class="c" style="transform:scaleX(0.848);">7</span><span class="c" style="transform:scaleX(0.848);">0</span></div>
<div class="a g" style="left:551.0px;top:127px;color:#a0001c;"><span class="c" style="transform:scaleX(0.848);">9</span><span class="c">.</span><span class="c" style="transform:scaleX(0.848);">5</span><span class="c" style="transform:scaleX(0.848);">0</span></div>
<div class="a g" style="left:707.0px;top:127px;color:#10107a;"><span class="c" style="transform:scaleX(0.807);">−</span><span class="c" style="transform:scaleX(0.848);">0</span><span class="c">.</span><span class="c" style="transform:scaleX(0.848);">8</span><span class="c" style="transform:scaleX(0.848);">0</span></div>
<div class="a" style="left:108px;top:144px;width:633px;height:19px;background:#fff;border-bottom:1px solid #dad8e4"></div>
<div class="a g" style="left:114.0px;top:146px;color:#000;"><span class="h" style="width:36.0px;font-size:13px;letter-spacing:-1.0px;">총수익</span><span class="c" style="font-size:12px;top:0px;">(</span><span class="c" style="transform:scaleX(0.707);">P</span><span class="c">t</span><span class="c" style="font-size:12px;top:0px;">)</span></div>
<div class="a g" style="left:378.0px;top:146px;color:#a0001c;"><span class="c" style="transform:scaleX(0.848);">5</span><span class="c" style="transform:scaleX(0.848);">5</span><span class="c" style="transform:scaleX(0.848);">1</span><span class="c">.</span><span class="c" style="transform:scaleX(0.848);">2</span><span class="c" style="transform:scaleX(0.848);">7</span></div>
<div class="a g" style="left:539.0px;top:146px;color:#a0001c;"><span class="c" style="transform:scaleX(0.848);">2</span><span class="c" style="transform:scaleX(0.848);">7</span><span class="c" style="transform:scaleX(0.848);">7</span><span class="c">.</span><span class="c" style="transform:scaleX(0.848);">2</span><span class="c" style="transform:scaleX(0.848);">0</span></div>
<div class="a g" style="left:701.0px;top:146px;color:#a0001c;"><span class="c" style="transform:scaleX(0.848);">2</span><span class="c" style="transform:scaleX(0.848);">7</span><span class="c" style="transform:scaleX(0.848);">4</span><span class="c">.</span><span class="c" style="transform:scaleX(0.848);">0</span><span class="c" style="transform:scaleX(0.848);">7</span></div>
<div class="a" style="left:108px;top:163px;width:633px;height:19px;background:#fff;border-bottom:1px solid #dad8e4"></div>
<div class="a g" style="left:114.0px;top:165px;color:#000;"><span class="h" style="width:36.0px;font-size:13px;letter-spacing:-1.0px;">총손실</span><span class="c" style="font-size:12px;top:0px;">(</span><span class="c" style="transform:scaleX(0.707);">P</span><span class="c">t</span><span class="c" style="font-size:12px;top:0px;">)</span></div>
<div class="a g" style="left:372.0px;top:165px;color:#10107a;"><span class="c" style="transform:scaleX(0.807);">−</span><span class="c" style="transform:scaleX(0.848);">5</span><span class="c" style="transform:scaleX(0.848);">4</span><span class="c" style="transform:scaleX(0.848);">3</span><span class="c">.</span><span class="c" style="transform:scaleX(0.848);">4</span><span class="c" style="transform:scaleX(0.848);">3</span></div>
<div class="a g" style="left:533.0px;top:165px;color:#10107a;"><span class="c" style="transform:scaleX(0.807);">−</span><span class="c" style="transform:scaleX(0.848);">2</span><span class="c" style="transform:scaleX(0.848);">6</span><span class="c" style="transform:scaleX(0.848);">8</span><span class="c">.</span><span class="c" style="transform:scaleX(0.848);">5</span><span class="c" style="transform:scaleX(0.848);">6</span></div>
<div class="a g" style="left:695.0px;top:165px;color:#10107a;"><span class="c" style="transform:scaleX(0.807);">−</span><span class="c" style="transform:scaleX(0.848);">2</span><span class="c" style="transform:scaleX(0.848);">7</span><span class="c" style="transform:scaleX(0.848);">4</span><span class="c">.</span><span class="c" style="transform:scaleX(0.848);">8</span><span class="c" style="transform:scaleX(0.848);">7</span></div>
<div class="a" style="left:108px;top:182px;width:633px;height:19px;background:#eae8fa;border-bottom:1px solid #dad8e4"></div>
<div class="a g" style="left:114.0px;top:184px;color:#000;"><span class="h" style="width:24.0px;font-size:13px;letter-spacing:-1.0px;">기간</span><span class="sp" style="width:6px"></span><span class="h" style="width:24.0px;font-size:13px;letter-spacing:-1.0px;">가격</span><span class="sp" style="width:6px"></span><span class="h" style="width:24.0px;font-size:13px;letter-spacing:-1.0px;">변화</span><span class="c" style="font-size:12px;top:0px;">(</span><span class="c" style="transform:scaleX(0.707);">P</span><span class="c">t</span><span class="c" style="font-size:12px;top:0px;">)</span></div>
<div class="a g" style="left:545.0px;top:184px;color:#000;"><span class="c" style="transform:scaleX(0.848);">1</span><span class="c" style="transform:scaleX(0.848);">7</span><span class="c">.</span><span class="c" style="transform:scaleX(0.848);">5</span><span class="c" style="transform:scaleX(0.848);">0</span></div>
<div class="a g" style="left:701.0px;top:184px;color:#000;"><span class="c" style="transform:scaleX(0.807);">−</span><span class="c" style="transform:scaleX(0.848);">1</span><span class="c" style="transform:scaleX(0.848);">7</span><span class="c">.</span><span class="c" style="transform:scaleX(0.848);">5</span><span class="c" style="transform:scaleX(0.848);">0</span></div>
<div class="a" style="left:108px;top:201px;width:633px;height:19px;background:#eae8fa;border-bottom:1px solid #dad8e4"></div>
<div class="a g" style="left:114.0px;top:203px;color:#000;"><span class="h" style="width:24.0px;font-size:13px;letter-spacing:-1.0px;">가격</span><span class="sp" style="width:6px"></span><span class="h" style="width:48.0px;font-size:13px;letter-spacing:-1.0px;">변화대비</span><span class="sp" style="width:6px"></span><span class="h" style="width:36.0px;font-size:13px;letter-spacing:-1.0px;">수익률</span><span class="c" style="font-size:12px;top:0px;">(</span><span class="c" style="transform:scaleX(0.530);">%</span><span class="c" style="font-size:12px;top:0px;">)</span></div>
<div class="a g" style="left:551.0px;top:203px;color:#000;"><span class="c" style="transform:scaleX(0.848);">1</span><span class="c">.</span><span class="c" style="transform:scaleX(0.848);">3</span><span class="c" style="transform:scaleX(0.848);">6</span></div>
<div class="a g" style="left:707.0px;top:203px;color:#000;"><span class="c" style="transform:scaleX(0.848);">9</span><span class="c" style="transform:scaleX(0.848);">0</span><span class="c">.</span><span class="c" style="transform:scaleX(0.848);">6</span><span class="c" style="transform:scaleX(0.848);">3</span></div>
<div class="a" style="left:108px;top:220px;width:633px;height:19px;background:#eae8fa;border-bottom:1px solid #dad8e4"></div>
<div class="a g" style="left:114.0px;top:222px;color:#000;"><span class="h" style="width:36.0px;font-size:13px;letter-spacing:-1.0px;">연평균</span><span class="sp" style="width:6px"></span><span class="h" style="width:48.0px;font-size:13px;letter-spacing:-1.0px;">가격변화</span><span class="c" style="font-size:12px;top:0px;">(</span><span class="c" style="transform:scaleX(0.707);">P</span><span class="c">t</span><span class="c" style="font-size:12px;top:0px;">)</span></div>
<div class="a g" style="left:545.0px;top:222px;color:#000;"><span class="c" style="transform:scaleX(0.848);">1</span><span class="c" style="transform:scaleX(0.848);">1</span><span class="c">.</span><span class="c" style="transform:scaleX(0.848);">3</span><span class="c" style="transform:scaleX(0.848);">9</span></div>
<div class="a g" style="left:701.0px;top:222px;color:#000;"><span class="c" style="transform:scaleX(0.807);">−</span><span class="c" style="transform:scaleX(0.848);">1</span><span class="c" style="transform:scaleX(0.848);">1</span><span class="c">.</span><span class="c" style="transform:scaleX(0.848);">3</span><span class="c" style="transform:scaleX(0.848);">9</span></div>
<div class="a" style="left:108px;top:239px;width:633px;height:19px;background:#eae8fa;border-bottom:1px solid #dad8e4"></div>
<div class="a g" style="left:114.0px;top:241px;color:#000;"><span class="h" style="width:36.0px;font-size:13px;letter-spacing:-1.0px;">연평균</span><span class="sp" style="width:6px"></span><span class="h" style="width:24.0px;font-size:13px;letter-spacing:-1.0px;">손익</span><span class="c" style="font-size:12px;top:0px;">(</span><span class="c" style="transform:scaleX(0.707);">P</span><span class="c">t</span><span class="c" style="font-size:12px;top:0px;">)</span></div>
<div class="a g" style="left:390.0px;top:241px;color:#a0001c;"><span class="c" style="transform:scaleX(0.848);">5</span><span class="c">.</span><span class="c" style="transform:scaleX(0.848);">1</span><span class="c" style="transform:scaleX(0.848);">0</span></div>
<div class="a g" style="left:551.0px;top:241px;color:#a0001c;"><span class="c" style="transform:scaleX(0.848);">5</span><span class="c">.</span><span class="c" style="transform:scaleX(0.848);">6</span><span class="c" style="transform:scaleX(0.848);">2</span></div>
<div class="a g" style="left:707.0px;top:241px;color:#10107a;"><span class="c" style="transform:scaleX(0.807);">−</span><span class="c" style="transform:scaleX(0.848);">0</span><span class="c">.</span><span class="c" style="transform:scaleX(0.848);">5</span><span class="c" style="transform:scaleX(0.848);">2</span></div>
<div class="a" style="left:108px;top:258px;width:633px;height:19px;background:#fff;border-bottom:1px solid #dad8e4"></div>
<div class="a g" style="left:114.0px;top:260px;color:#000;"><span class="h" style="width:36.0px;font-size:13px;letter-spacing:-1.0px;">총거래</span><span class="sp" style="width:6px"></span><span class="h" style="width:24.0px;font-size:13px;letter-spacing:-1.0px;">횟수</span></div>
<div class="a g" style="left:396.0px;top:260px;color:#000;"><span class="c" style="transform:scaleX(0.848);">4</span><span class="c" style="transform:scaleX(0.848);">1</span><span class="c" style="transform:scaleX(0.848);">0</span></div>
<div class="a g" style="left:557.0px;top:260px;color:#000;"><span class="c" style="transform:scaleX(0.848);">2</span><span class="c" style="transform:scaleX(0.848);">0</span><span class="c" style="transform:scaleX(0.848);">7</span></div>
<div class="a g" style="left:719.0px;top:260px;color:#000;"><span class="c" style="transform:scaleX(0.848);">2</span><span class="c" style="transform:scaleX(0.848);">0</span><span class="c" style="transform:scaleX(0.848);">3</span></div>
<div class="a" style="left:108px;top:277px;width:633px;height:19px;background:#fff;border-bottom:1px solid #dad8e4"></div>
<div class="a g" style="left:114.0px;top:279px;color:#000;"><span class="h" style="width:48.0px;font-size:13px;letter-spacing:-1.0px;">수익거래</span><span class="sp" style="width:6px"></span><span class="h" style="width:24.0px;font-size:13px;letter-spacing:-1.0px;">횟수</span></div>
<div class="a g" style="left:396.0px;top:279px;color:#000;"><span class="c" style="transform:scaleX(0.848);">2</span><span class="c" style="transform:scaleX(0.848);">4</span><span class="c" style="transform:scaleX(0.848);">3</span></div>
<div class="a g" style="left:557.0px;top:279px;color:#000;"><span class="c" style="transform:scaleX(0.848);">1</span><span class="c" style="transform:scaleX(0.848);">2</span><span class="c" style="transform:scaleX(0.848);">4</span></div>
<div class="a g" style="left:719.0px;top:279px;color:#000;"><span class="c" style="transform:scaleX(0.848);">1</span><span class="c" style="transform:scaleX(0.848);">1</span><span class="c" style="transform:scaleX(0.848);">9</span></div>
<div class="a" style="left:108px;top:296px;width:633px;height:19px;background:#fff;border-bottom:1px solid #dad8e4"></div>
<div class="a g" style="left:114.0px;top:298px;color:#000;"><span class="h" style="width:48.0px;font-size:13px;letter-spacing:-1.0px;">손실거래</span><span class="sp" style="width:6px"></span><span class="h" style="width:24.0px;font-size:13px;letter-spacing:-1.0px;">횟수</span></div>
<div class="a g" style="left:396.0px;top:298px;color:#000;"><span class="c" style="transform:scaleX(0.848);">1</span><span class="c" style="transform:scaleX(0.848);">6</span><span class="c" style="transform:scaleX(0.848);">7</span></div>
<div class="a g" style="left:563.0px;top:298px;color:#000;"><span class="c" style="transform:scaleX(0.848);">8</span><span class="c" style="transform:scaleX(0.848);">3</span></div>
<div class="a g" style="left:725.0px;top:298px;color:#000;"><span class="c" style="transform:scaleX(0.848);">8</span><span class="c" style="transform:scaleX(0.848);">4</span></div>
<div class="a" style="left:108px;top:315px;width:633px;height:19px;background:#fff;border-bottom:1px solid #dad8e4"></div>
<div class="a g" style="left:114.0px;top:317px;color:#000;"><span class="h" style="width:24.0px;font-size:13px;letter-spacing:-1.0px;">승률</span><span class="c" style="font-size:12px;top:0px;">(</span><span class="c" style="transform:scaleX(0.530);">%</span><span class="c" style="font-size:12px;top:0px;">)</span></div>
<div class="a g" style="left:384.0px;top:317px;color:#000;"><span class="c" style="transform:scaleX(0.848);">5</span><span class="c" style="transform:scaleX(0.848);">9</span><span class="c">.</span><span class="c" style="transform:scaleX(0.848);">2</span><span class="c" style="transform:scaleX(0.848);">7</span></div>
<div class="a g" style="left:545.0px;top:317px;color:#000;"><span class="c" style="transform:scaleX(0.848);">5</span><span class="c" style="transform:scaleX(0.848);">9</span><span class="c">.</span><span class="c" style="transform:scaleX(0.848);">9</span><span class="c" style="transform:scaleX(0.848);">0</span></div>
<div class="a g" style="left:707.0px;top:317px;color:#000;"><span class="c" style="transform:scaleX(0.848);">5</span><span class="c" style="transform:scaleX(0.848);">8</span><span class="c">.</span><span class="c" style="transform:scaleX(0.848);">6</span><span class="c" style="transform:scaleX(0.848);">2</span></div>
<div class="a" style="left:108px;top:334px;width:633px;height:19px;background:#fff;border-bottom:1px solid #dad8e4"></div>
<div class="a g" style="left:114.0px;top:336px;color:#000;"><span class="h" style="width:48.0px;font-size:13px;letter-spacing:-1.0px;">평균손익</span><span class="c" style="font-size:12px;top:0px;">(</span><span class="c" style="transform:scaleX(0.707);">P</span><span class="c">t</span><span class="c" style="font-size:12px;top:0px;">)</span></div>
<div class="a g" style="left:390.0px;top:336px;color:#000;"><span class="c" style="transform:scaleX(0.848);">0</span><span class="c">.</span><span class="c" style="transform:scaleX(0.848);">0</span><span class="c" style="transform:scaleX(0.848);">2</span></div>
<div class="a g" style="left:551.0px;top:336px;color:#000;"><span class="c" style="transform:scaleX(0.848);">0</span><span class="c">.</span><span class="c" style="transform:scaleX(0.848);">0</span><span class="c" style="transform:scaleX(0.848);">4</span></div>
<div class="a g" style="left:707.0px;top:336px;color:#000;"><span class="c" style="transform:scaleX(0.807);">−</span><span class="c" style="transform:scaleX(0.848);">0</span><span class="c">.</span><span class="c" style="transform:scaleX(0.848);">0</span><span class="c" style="transform:scaleX(0.848);">0</span></div>
<div class="a" style="left:108px;top:353px;width:633px;height:19px;background:#fff;border-bottom:1px solid #dad8e4"></div>
<div class="a g" style="left:114.0px;top:355px;color:#000;"><span class="h" style="width:60.0px;font-size:13px;letter-spacing:-1.0px;">평균손익비</span></div>
<div class="a g" style="left:390.0px;top:355px;color:#000;"><span class="c" style="transform:scaleX(0.848);">0</span><span class="c">.</span><span class="c" style="transform:scaleX(0.848);">7</span><span class="c" style="transform:scaleX(0.848);">0</span></div>
<div class="a g" style="left:551.0px;top:355px;color:#000;"><span class="c" style="transform:scaleX(0.848);">0</span><span class="c">.</span><span class="c" style="transform:scaleX(0.848);">6</span><span class="c" style="transform:scaleX(0.848);">9</span></div>
<div class="a g" style="left:713.0px;top:355px;color:#000;"><span class="c" style="transform:scaleX(0.848);">0</span><span class="c">.</span><span class="c" style="transform:scaleX(0.848);">7</span><span class="c" style="transform:scaleX(0.848);">0</span></div>
<div class="a" style="left:108px;top:372px;width:633px;height:19px;background:#eae8fa;border-bottom:1px solid #dad8e4"></div>
<div class="a g" style="left:114.0px;top:374px;color:#000;"><span class="h" style="width:48.0px;font-size:13px;letter-spacing:-1.0px;">최대수익</span><span class="c" style="font-size:12px;top:0px;">(</span><span class="c" style="transform:scaleX(0.707);">P</span><span class="c">t</span><span class="c" style="font-size:12px;top:0px;">)</span></div>
<div class="a g" style="left:384.0px;top:374px;color:#a0001c;"><span class="c" style="transform:scaleX(0.848);">1</span><span class="c" style="transform:scaleX(0.848);">1</span><span class="c">.</span><span class="c" style="transform:scaleX(0.848);">8</span><span class="c" style="transform:scaleX(0.848);">8</span></div>
<div class="a g" style="left:545.0px;top:374px;color:#a0001c;"><span class="c" style="transform:scaleX(0.848);">1</span><span class="c" style="transform:scaleX(0.848);">1</span><span class="c">.</span><span class="c" style="transform:scaleX(0.848);">8</span><span class="c" style="transform:scaleX(0.848);">8</span></div>
<div class="a g" style="left:707.0px;top:374px;color:#a0001c;"><span class="c" style="transform:scaleX(0.848);">1</span><span class="c" style="transform:scaleX(0.848);">1</span><span class="c">.</span><span class="c" style="transform:scaleX(0.848);">5</span><span class="c" style="transform:scaleX(0.848);">3</span></div>
<div class="a" style="left:108px;top:391px;width:633px;height:19px;background:#eae8fa;border-bottom:1px solid #dad8e4"></div>
<div class="a g" style="left:114.0px;top:393px;color:#000;"><span class="h" style="width:48.0px;font-size:13px;letter-spacing:-1.0px;">평균수익</span><span class="c" style="font-size:12px;top:0px;">(</span><span class="c" style="transform:scaleX(0.707);">P</span><span class="c">t</span><span class="c" style="font-size:12px;top:0px;">)</span></div>
<div class="a g" style="left:390.0px;top:393px;color:#a0001c;"><span class="c" style="transform:scaleX(0.848);">2</span><span class="c">.</span><span class="c" style="transform:scaleX(0.848);">2</span><span class="c" style="transform:scaleX(0.848);">7</span></div>
<div class="a g" style="left:551.0px;top:393px;color:#a0001c;"><span class="c" style="transform:scaleX(0.848);">2</span><span class="c">.</span><span class="c" style="transform:scaleX(0.848);">2</span><span class="c" style="transform:scaleX(0.848);">4</span></div>
<div class="a g" style="left:713.0px;top:393px;color:#a0001c;"><span class="c" style="transform:scaleX(0.848);">2</span><span class="c">.</span><span class="c" style="transform:scaleX(0.848);">3</span><span class="c" style="transform:scaleX(0.848);">0</span></div>
<div class="a" style="left:108px;top:410px;width:633px;height:19px;background:#eae8fa;border-bottom:1px solid #dad8e4"></div>
<div class="a g" style="left:114.0px;top:412px;color:#000;"><span class="h" style="width:48.0px;font-size:13px;letter-spacing:-1.0px;">최대연속</span><span class="sp" style="width:6px"></span><span class="h" style="width:48.0px;font-size:13px;letter-spacing:-1.0px;">수익거래</span><span class="sp" style="width:6px"></span><span class="h" style="width:24.0px;font-size:13px;letter-spacing:-1.0px;">횟수</span></div>
<div class="a g" style="left:402.0px;top:412px;color:#000;"><span class="c" style="transform:scaleX(0.848);">1</span><span class="c" style="transform:scaleX(0.848);">2</span></div>
<div class="a g" style="left:563.0px;top:412px;color:#000;"><span class="c" style="transform:scaleX(0.848);">1</span><span class="c" style="transform:scaleX(0.848);">3</span></div>
<div class="a g" style="left:731.0px;top:412px;color:#000;"><span class="c" style="transform:scaleX(0.848);">9</span></div>
<div class="a" style="left:108px;top:429px;width:633px;height:19px;background:#eae8fa;border-bottom:1px solid #dad8e4"></div>
<div class="a g" style="left:114.0px;top:431px;color:#000;"><span class="h" style="width:48.0px;font-size:13px;letter-spacing:-1.0px;">수익거래</span><span class="sp" style="width:6px"></span><span class="h" style="width:24.0px;font-size:13px;letter-spacing:-1.0px;">평균</span><span class="sp" style="width:6px"></span><span class="h" style="width:12.0px;font-size:13px;letter-spacing:-1.0px;">봉</span><span class="sp" style="width:6px"></span><span class="h" style="width:24.0px;font-size:13px;letter-spacing:-1.0px;">개수</span></div>
<div class="a g" style="left:390.0px;top:431px;color:#000;"><span class="c" style="transform:scaleX(0.848);">9</span><span class="c">.</span><span class="c" style="transform:scaleX(0.848);">5</span><span class="c" style="transform:scaleX(0.848);">6</span></div>
<div class="a g" style="left:551.0px;top:431px;color:#000;"><span class="c" style="transform:scaleX(0.848);">9</span><span class="c">.</span><span class="c" style="transform:scaleX(0.848);">9</span><span class="c" style="transform:scaleX(0.848);">3</span></div>
<div class="a g" style="left:713.0px;top:431px;color:#000;"><span class="c" style="transform:scaleX(0.848);">9</span><span class="c">.</span><span class="c" style="transform:scaleX(0.848);">1</span><span class="c" style="transform:scaleX(0.848);">8</span></div>
<div class="a" style="left:108px;top:448px;width:633px;height:19px;background:#fff;border-bottom:1px solid #dad8e4"></div>
<div class="a g" style="left:114.0px;top:450px;color:#000;"><span class="h" style="width:48.0px;font-size:13px;letter-spacing:-1.0px;">최대손실</span><span class="c" style="font-size:12px;top:0px;">(</span><span class="c" style="transform:scaleX(0.707);">P</span><span class="c">t</span><span class="c" style="font-size:12px;top:0px;">)</span></div>
<div class="a g" style="left:378.0px;top:450px;color:#10107a;"><span class="c" style="transform:scaleX(0.807);">−</span><span class="c" style="transform:scaleX(0.848);">1</span><span class="c" style="transform:scaleX(0.848);">4</span><span class="c">.</span><span class="c" style="transform:scaleX(0.848);">6</span><span class="c" style="transform:scaleX(0.848);">2</span></div>
<div class="a g" style="left:539.0px;top:450px;color:#10107a;"><span class="c" style="transform:scaleX(0.807);">−</span><span class="c" style="transform:scaleX(0.848);">1</span><span class="c" style="transform:scaleX(0.848);">4</span><span class="c">.</span><span class="c" style="transform:scaleX(0.848);">6</span><span class="c" style="transform:scaleX(0.848);">2</span></div>
<div class="a g" style="left:701.0px;top:450px;color:#10107a;"><span class="c" style="transform:scaleX(0.807);">−</span><span class="c" style="transform:scaleX(0.848);">1</span><span class="c" style="transform:scaleX(0.848);">0</span><span class="c">.</span><span class="c" style="transform:scaleX(0.848);">5</span><span class="c" style="transform:scaleX(0.848);">7</span></div>
<div class="a" style="left:108px;top:467px;width:633px;height:19px;background:#fff;border-bottom:1px solid #dad8e4"></div>
<div class="a g" style="left:114.0px;top:469px;color:#000;"><span class="h" style="width:48.0px;font-size:13px;letter-spacing:-1.0px;">평균손실</span><span class="c" style="font-size:12px;top:0px;">(</span><span class="c" style="transform:scaleX(0.707);">P</span><span class="c">t</span><span class="c" style="font-size:12px;top:0px;">)</span></div>
<div class="a g" style="left:384.0px;top:469px;color:#10107a;"><span class="c" style="transform:scaleX(0.807);">−</span><span class="c" style="transform:scaleX(0.848);">3</span><span class="c">.</span><span class="c" style="transform:scaleX(0.848);">2</span><span class="c" style="transform:scaleX(0.848);">5</span></div>
<div class="a g" style="left:545.0px;top:469px;color:#10107a;"><span class="c" style="transform:scaleX(0.807);">−</span><span class="c" style="transform:scaleX(0.848);">3</span><span class="c">.</span><span class="c" style="transform:scaleX(0.848);">2</span><span class="c" style="transform:scaleX(0.848);">4</span></div>
<div class="a g" style="left:707.0px;top:469px;color:#10107a;"><span class="c" style="transform:scaleX(0.807);">−</span><span class="c" style="transform:scaleX(0.848);">3</span><span class="c">.</span><span class="c" style="transform:scaleX(0.848);">2</span><span class="c" style="transform:scaleX(0.848);">7</span></div>
<div class="a" style="left:108px;top:486px;width:633px;height:19px;background:#fff;border-bottom:1px solid #dad8e4"></div>
<div class="a g" style="left:114.0px;top:488px;color:#000;"><span class="h" style="width:48.0px;font-size:13px;letter-spacing:-1.0px;">최대연속</span><span class="sp" style="width:6px"></span><span class="h" style="width:48.0px;font-size:13px;letter-spacing:-1.0px;">손실거래</span><span class="sp" style="width:6px"></span><span class="h" style="width:24.0px;font-size:13px;letter-spacing:-1.0px;">횟수</span></div>
<div class="a g" style="left:408.0px;top:488px;color:#000;"><span class="c" style="transform:scaleX(0.848);">5</span></div>
<div class="a g" style="left:569.0px;top:488px;color:#000;"><span class="c" style="transform:scaleX(0.848);">4</span></div>
<div class="a g" style="left:731.0px;top:488px;color:#000;"><span class="c" style="transform:scaleX(0.848);">5</span></div>
<div class="a" style="left:108px;top:505px;width:633px;height:19px;background:#fff;border-bottom:1px solid #dad8e4"></div>
<div class="a g" style="left:114.0px;top:507px;color:#000;"><span class="h" style="width:48.0px;font-size:13px;letter-spacing:-1.0px;">손실거래</span><span class="sp" style="width:6px"></span><span class="h" style="width:24.0px;font-size:13px;letter-spacing:-1.0px;">평균</span><span class="sp" style="width:6px"></span><span class="h" style="width:12.0px;font-size:13px;letter-spacing:-1.0px;">봉</span><span class="sp" style="width:6px"></span><span class="h" style="width:24.0px;font-size:13px;letter-spacing:-1.0px;">개수</span></div>
<div class="a g" style="left:384.0px;top:507px;color:#000;"><span class="c" style="transform:scaleX(0.848);">1</span><span class="c" style="transform:scaleX(0.848);">5</span><span class="c">.</span><span class="c" style="transform:scaleX(0.848);">4</span><span class="c" style="transform:scaleX(0.848);">3</span></div>
<div class="a g" style="left:545.0px;top:507px;color:#000;"><span class="c" style="transform:scaleX(0.848);">1</span><span class="c" style="transform:scaleX(0.848);">4</span><span class="c">.</span><span class="c" style="transform:scaleX(0.848);">1</span><span class="c" style="transform:scaleX(0.848);">2</span></div>
<div class="a g" style="left:707.0px;top:507px;color:#000;"><span class="c" style="transform:scaleX(0.848);">1</span><span class="c" style="transform:scaleX(0.848);">6</span><span class="c">.</span><span class="c" style="transform:scaleX(0.848);">7</span><span class="c" style="transform:scaleX(0.848);">1</span></div>
<div class="a" style="left:108px;top:524px;width:633px;height:19px;background:#eae8fa;border-bottom:1px solid #dad8e4"></div>
<div class="a g" style="left:114.0px;top:526px;color:#000;"><span class="h" style="width:60.0px;font-size:13px;letter-spacing:-1.0px;">최대손실폭</span><span class="c" style="font-size:12px;top:0px;">(</span><span class="c" style="transform:scaleX(0.707);">P</span><span class="c">t</span><span class="c" style="font-size:12px;top:0px;">)</span></div>
<div class="a g" style="left:378.0px;top:526px;color:#000;"><span class="c" style="transform:scaleX(0.807);">−</span><span class="c" style="transform:scaleX(0.848);">9</span><span class="c" style="transform:scaleX(0.848);">9</span><span class="c">.</span><span class="c" style="transform:scaleX(0.848);">4</span><span class="c" style="transform:scaleX(0.848);">3</span></div>
<div class="a g" style="left:539.0px;top:526px;color:#000;"><span class="c" style="transform:scaleX(0.807);">−</span><span class="c" style="transform:scaleX(0.848);">8</span><span class="c" style="transform:scaleX(0.848);">3</span><span class="c">.</span><span class="c" style="transform:scaleX(0.848);">0</span><span class="c" style="transform:scaleX(0.848);">8</span></div>
<div class="a g" style="left:701.0px;top:526px;color:#000;"><span class="c" style="transform:scaleX(0.807);">−</span><span class="c" style="transform:scaleX(0.848);">4</span><span class="c" style="transform:scaleX(0.848);">5</span><span class="c">.</span><span class="c" style="transform:scaleX(0.848);">9</span><span class="c" style="transform:scaleX(0.848);">9</span></div>
<div class="a" style="left:108px;top:543px;width:633px;height:19px;background:#eae8fa;border-bottom:1px solid #dad8e4"></div>
<div class="a g" style="left:114.0px;top:545px;color:#000;"><span class="h" style="width:48.0px;font-size:13px;letter-spacing:-1.0px;">보상비율</span><span class="c" style="font-size:12px;top:0px;">(</span><span class="c" style="transform:scaleX(0.530);">%</span><span class="c" style="font-size:12px;top:0px;">)</span></div>
<div class="a g" style="left:390.0px;top:545px;color:#000;"><span class="c" style="transform:scaleX(0.848);">0</span><span class="c">.</span><span class="c" style="transform:scaleX(0.848);">0</span><span class="c" style="transform:scaleX(0.848);">8</span></div>
<div class="a g" style="left:551.0px;top:545px;color:#000;"><span class="c" style="transform:scaleX(0.848);">0</span><span class="c">.</span><span class="c" style="transform:scaleX(0.848);">1</span><span class="c" style="transform:scaleX(0.848);">0</span></div>
<div class="a g" style="left:713.0px;top:545px;color:#000;"><span class="c" style="transform:scaleX(0.848);">0</span><span class="c">.</span><span class="c" style="transform:scaleX(0.848);">0</span><span class="c" style="transform:scaleX(0.848);">2</span></div>
<div class="a" style="left:108px;top:562px;width:633px;height:19px;background:#eae8fa;border-bottom:1px solid #dad8e4"></div>
<div class="a g" style="left:114.0px;top:564px;color:#000;"><span class="h" style="width:36.0px;font-size:13px;letter-spacing:-1.0px;">총수익</span><span class="c">/</span><span class="h" style="width:36.0px;font-size:13px;letter-spacing:-1.0px;">총손실</span></div>
<div class="a g" style="left:390.0px;top:564px;color:#000;"><span class="c" style="transform:scaleX(0.848);">1</span><span class="c">.</span><span class="c" style="transform:scaleX(0.848);">0</span><span class="c" style="transform:scaleX(0.848);">1</span></div>
<div class="a g" style="left:551.0px;top:564px;color:#000;"><span class="c" style="transform:scaleX(0.848);">1</span><span class="c">.</span><span class="c" style="transform:scaleX(0.848);">0</span><span class="c" style="transform:scaleX(0.848);">3</span></div>
<div class="a g" style="left:713.0px;top:564px;color:#000;"><span class="c" style="transform:scaleX(0.848);">1</span><span class="c">.</span><span class="c" style="transform:scaleX(0.848);">0</span><span class="c" style="transform:scaleX(0.848);">0</span></div>
<div class="a" style="left:108px;top:581px;width:633px;height:19px;background:#eae8fa;border-bottom:1px solid #dad8e4"></div>
<div class="a g" style="left:114.0px;top:583px;color:#000;"><span class="h" style="width:72.0px;font-size:13px;letter-spacing:-1.0px;">투자요구금액</span><span class="c" style="font-size:12px;top:0px;">(</span><span class="c" style="transform:scaleX(0.707);">P</span><span class="c">t</span><span class="c" style="font-size:12px;top:0px;">)</span></div>
<div class="a g" style="left:378.0px;top:583px;color:#000;"><span class="c" style="transform:scaleX(0.848);">3</span><span class="c" style="transform:scaleX(0.848);">0</span><span class="c" style="transform:scaleX(0.848);">3</span><span class="c">.</span><span class="c" style="transform:scaleX(0.848);">6</span><span class="c" style="transform:scaleX(0.848);">3</span></div>
<div class="a g" style="left:539.0px;top:583px;color:#000;"><span class="c" style="transform:scaleX(0.848);">2</span><span class="c" style="transform:scaleX(0.848);">8</span><span class="c" style="transform:scaleX(0.848);">7</span><span class="c">.</span><span class="c" style="transform:scaleX(0.848);">2</span><span class="c" style="transform:scaleX(0.848);">8</span></div>
<div class="a g" style="left:701.0px;top:583px;color:#000;"><span class="c" style="transform:scaleX(0.848);">2</span><span class="c" style="transform:scaleX(0.848);">4</span><span class="c" style="transform:scaleX(0.848);">7</span><span class="c">.</span><span class="c" style="transform:scaleX(0.848);">5</span><span class="c" style="transform:scaleX(0.848);">9</span></div>
<div class="a" style="left:108px;top:600px;width:633px;height:19px;background:#eae8fa;border-bottom:1px solid #dad8e4"></div>
<div class="a g" style="left:114.0px;top:602px;color:#000;"><span class="h" style="width:36.0px;font-size:13px;letter-spacing:-1.0px;">수익률</span><span class="c" style="font-size:12px;top:0px;">(</span><span class="c" style="transform:scaleX(0.530);">%</span><span class="c" style="font-size:12px;top:0px;">)</span></div>
<div class="a g" style="left:390.0px;top:602px;color:#000;"><span class="c" style="transform:scaleX(0.848);">2</span><span class="c">.</span><span class="c" style="transform:scaleX(0.848);">5</span><span class="c" style="transform:scaleX(0.848);">8</span></div>
<div class="a g" style="left:551.0px;top:602px;color:#000;"><span class="c" style="transform:scaleX(0.848);">3</span><span class="c">.</span><span class="c" style="transform:scaleX(0.848);">0</span><span class="c" style="transform:scaleX(0.848);">1</span></div>
<div class="a g" style="left:707.0px;top:602px;color:#000;"><span class="c" style="transform:scaleX(0.807);">−</span><span class="c" style="transform:scaleX(0.848);">0</span><span class="c">.</span><span class="c" style="transform:scaleX(0.848);">3</span><span class="c" style="transform:scaleX(0.848);">2</span></div>
<div class="a" style="left:257px;top:105px;width:1px;height:513px;background:#dcdcdc"></div>
<div class="a" style="left:418px;top:105px;width:1px;height:513px;background:#dcdcdc"></div>
<div class="a" style="left:579px;top:105px;width:1px;height:513px;background:#dcdcdc"></div>
<div class="a" style="left:102px;top:631px;width:644px;height:1px;background:#000"></div>
<div class="a" style="left:100px;top:647px;width:648px;height:2px;background:#f6f4ec"></div>
<div class="a" style="left:104px;top:632px;width:42px;height:15px;background:#ece9d8;border-left:1px solid #000;border-bottom:1px solid #000;border-radius:0 0 0 3px"></div>
<div class="a" style="left:102px;top:631px;width:3px;height:1px;background:#000"></div>
<div class="a g" style="left:113.5px;top:632px;color:#000;"><span class="h" style="width:24.0px;font-size:13px;letter-spacing:-1.0px;">종합</span></div>
<div class="a" style="left:145px;top:631px;width:61px;height:16px;background:#b0aca0;border:1px solid #000;border-radius:0 0 3px 3px"></div>
<div class="a g" style="left:152.0px;top:632px;color:#000;"><span class="h" style="width:48.0px;font-size:13px;letter-spacing:-1.0px;">거래내역</span></div>
<div class="a" style="left:205px;top:631px;width:61px;height:16px;background:#b0aca0;border:1px solid #000;border-radius:0 0 3px 3px"></div>
<div class="a g" style="left:212.0px;top:632px;color:#000;"><span class="h" style="width:48.0px;font-size:13px;letter-spacing:-1.0px;">기간분석</span></div>
<div class="a" style="left:265px;top:631px;width:63px;height:16px;background:#b0aca0;border:1px solid #000;border-radius:0 0 3px 3px"></div>
<div class="a g" style="left:273.0px;top:632px;color:#000;"><span class="h" style="width:48.0px;font-size:13px;letter-spacing:-1.0px;">전략분석</span></div>
<div class="a" style="left:327px;top:631px;width:85px;height:16px;background:#b0aca0;border:1px solid #000;border-radius:0 0 3px 3px"></div>
<div class="a g" style="left:334.0px;top:632px;color:#000;"><span class="h" style="width:72.0px;font-size:13px;letter-spacing:-1.0px;">수익손실거래</span></div>
<div class="a" style="left:411px;top:631px;width:48px;height:16px;background:#b0aca0;border:1px solid #000;border-radius:0 0 3px 3px"></div>
<div class="a g" style="left:417.5px;top:632px;color:#000;"><span class="h" style="width:36.0px;font-size:13px;letter-spacing:-1.0px;">그래프</span></div>
<div class="a" style="left:458px;top:631px;width:44px;height:16px;background:#b0aca0;border:1px solid #000;border-radius:0 0 3px 3px"></div>
<div class="a g" style="left:468.5px;top:632px;color:#000;"><span class="h" style="width:24.0px;font-size:13px;letter-spacing:-1.0px;">설정</span></div>
</body></html>
